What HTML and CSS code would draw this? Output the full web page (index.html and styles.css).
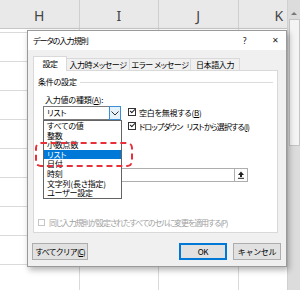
FILE: index.html
```html
<!DOCTYPE html>
<html lang="ja">
<head>
    <meta charset="UTF-8">
    <title>データの入力規則</title>
    <link rel="stylesheet" href="styles.css">
</head>
<body>
    <div class="sheet">
        <div class="grid">
            <div class="col-head">
                <div class="col">H</div>
                <div class="col">I</div>
                <div class="col">J</div>
                <div class="col">K</div>
            </div>
            <div class="cells"></div>
        </div>
        <div class="vscroll">
            <div class="up"></div>
            <div class="thumb"></div>
        </div>
    </div>

    <div class="dialog">
        <div class="titlebar">
            <span class="title">データの入力規則</span>
            <span class="help">?</span>
            <span class="close">✕</span>
        </div>
        <div class="body">
            <div class="tabs">
                <div class="tab active">設定</div>
                <div class="tab t2">入力時メッセージ</div>
                <div class="tab t3">エラー メッセージ</div>
                <div class="tab t4">日本語入力</div>
            </div>
            <div class="panel">
                <div class="group">条件の設定</div>
                <div class="field-label">入力値の種類(<u>A</u>):</div>
                <div class="row">
                    <div class="combo">
                        <div class="combo-text">リスト</div>
                        <div class="combo-btn">
                            <svg width="8" height="5" viewBox="0 0 8 5"><path d="M0.5 0.5 L4 4 L7.5 0.5" fill="none" stroke="#333" stroke-width="1"/></svg>
                        </div>
                        <ul class="droplist">
                            <li>すべての値</li>
                            <li>整数</li>
                            <li>小数点数</li>
                            <li class="sel">リスト</li>
                            <li>日付</li>
                            <li>時刻</li>
                            <li>文字列(長さ指定)</li>
                            <li>ユーザー設定</li>
                        </ul>
                    </div>
                    <div class="checks">
                        <label class="chk"><span class="box on"></span>空白を無視する(<u>B</u>)</label>
                        <label class="chk narrow"><span class="box on"></span>ドロップダウン<span class="gap"></span>リストから選択する(<u>I</u>)</label>
                    </div>
                </div>
                <div class="source">
                    <div class="src-input"></div>
                    <div class="src-btn">
                        <svg width="8" height="8" viewBox="0 0 8 8"><path d="M4 0.5 L7 4 L5 4 L5 6 L3 6 L3 4 L1 4 Z" fill="#222"/><rect x="1" y="6.8" width="6" height="1" fill="#222"/></svg>
                    </div>
                </div>
                <label class="chk disabled"><span class="box"></span>同じ入力規則が設定されたすべてのセルに変更を適用する(P)</label>
            </div>
            <div class="footer">
                <button class="btn clear">すべてクリア(<u>C</u>)</button>
                <button class="btn ok">OK</button>
                <button class="btn cancel">キャンセル</button>
            </div>
        </div>
    </div>

    <div class="mark"></div>
</body>
</html>
```

FILE: styles.css
```css
body {
    margin: 0;
    width: 300px;
    height: 290px;
    overflow: hidden;
    font-family: "Noto Sans CJK JP", "Noto Sans", sans-serif;
    font-feature-settings: "palt";
    background: #fff;
}
ul, li {
    margin: 0;
    padding: 0;
    list-style: none;
}
u {
    text-decoration-thickness: 1px;
    text-underline-offset: 1px;
}

/* シート */
.sheet {
    display: flex;
    width: 300px;
    height: 290px;
    overflow: hidden;
}
.grid {
    flex: 1;
    min-width: 0;
    display: flex;
    flex-direction: column;
    overflow: hidden;
}
.col-head {
    display: flex;
    height: 28px;
    background: #e9e9e9;
    border-bottom: 1px solid #c6c6c6;
}
.col {
    flex: 0 0 79.5px;
    box-sizing: border-box;
    padding-top: 9px;
    border-right: 1px solid #cfcfcf;
    text-align: center;
    font-family: "Noto Sans", sans-serif;
    font-size: 14px;
    line-height: 14px;
    color: #444;
}
.col:last-child {
    text-align: left;
    padding-left: 36px;
}
.cells {
    flex: 1;
    background:
        repeating-linear-gradient(to right, transparent 0 78.5px, #dadada 78.5px 79.5px),
        repeating-linear-gradient(to bottom, transparent 0 28px, #dadada 28px 29px);
    background-position: 0 0, 0 4px;
}
.vscroll {
    flex: 0 0 12px;
    background: #dcdcdc;
    border-left: 1px solid #d0d0d0;
    display: flex;
    flex-direction: column;
    align-items: center;
}
.up {
    width: 0;
    height: 0;
    margin-top: 12px;
    border-left: 3px solid transparent;
    border-right: 3px solid transparent;
    border-bottom: 3px solid #777;
}
.thumb {
    width: 9px;
    height: 125px;
    margin-top: 4px;
    background: #f4f4f4;
    border: 1px solid #c4c4c4;
}

/* ダイアログ */
.dialog {
    position: absolute;
    left: 27px;
    top: 30px;
    width: 260px;
    height: 237px;
    box-sizing: border-box;
    background: #f0f0f0;
    border: 1px solid #9a9a9a;
    box-shadow: 2px 3px 6px rgba(0,0,0,.3);
    font-size: 8px;
    letter-spacing: -0.2px;
    color: #000;
    white-space: nowrap;
}
.titlebar {
    display: flex;
    align-items: center;
    height: 19px;
    padding-left: 5px;
    background: #fff;
}
.title {
    flex: 1;
    font-size: 8px;
    letter-spacing: -0.9px;
}
.help {
    width: 29px;
    font-family: "Noto Sans", sans-serif;
    font-size: 8px;
}
.close {
    width: 14px;
    font-family: "DejaVu Sans", sans-serif;
    font-size: 8px;
    color: #222;
}
.body {
    padding: 6px 8px 0 5px;
}
.tabs {
    display: flex;
    align-items: flex-end;
    height: 14px;
}
.tab {
    box-sizing: border-box;
    height: 12px;
    line-height: 11px;
    text-align: center;
    border: 1px solid #d9d9d9;
    border-bottom: none;
    background: #f0f0f0;
    margin-left: -1px;
    letter-spacing: -0.4px;
}
.tab.active {
    height: 15px;
    margin-bottom: -1px;
    margin-left: 0;
    line-height: 14px;
    background: #fff;
    width: 34px;
    position: relative;
    z-index: 1;
}
.t2 { width: 64px; }
.t3 { width: 62px; }
.t4 { width: 50px; }
.panel {
    position: relative;
    height: 163px;
    box-sizing: border-box;
    background: #fff;
    border: 1px solid #d9d9d9;
    padding: 6px 4px 0 4px;
}
.group {
    display: flex;
    align-items: center;
    height: 10px;
    line-height: 10px;
}
.group::after {
    content: "";
    flex: 1;
    height: 1px;
    margin-left: 3px;
    background: #dcdcdc;
}
.field-label {
    margin: 8px 0 0 7px;
    height: 10px;
    line-height: 10px;
}
.row {
    display: flex;
    margin: 1px 0 0 5px;
}
.combo {
    position: relative;
    display: flex;
    width: 78px;
    height: 14px;
    box-sizing: border-box;
    border: 1px solid #7a7a7a;
    background: #fff;
}
.combo-text {
    flex: 1;
    padding-left: 3px;
    line-height: 12px;
}
.combo-btn {
    width: 10px;
    margin: -1px -1px -1px 0;
    display: flex;
    align-items: center;
    justify-content: center;
    background: #e5f1fb;
    border: 1px solid #3c8fd6;
}
.droplist {
    position: absolute;
    left: -1px;
    top: 13px;
    width: 79px;
    box-sizing: border-box;
    border: 1px solid #646464;
    background: #fff;
    z-index: 2;
}
.droplist li {
    height: 9.6px;
    line-height: 9.6px;
    padding-left: 3px;
}
.droplist li.sel {
    background: #0078d7;
    color: #fff;
}
.checks {
    display: flex;
    flex-direction: column;
    margin: -1px 0 0 7px;
}
.chk {
    display: flex;
    align-items: center;
    height: 14px;
    white-space: nowrap;
}
.chk.narrow {
    letter-spacing: -0.85px;
}
.gap {
    width: 4px;
}
.box {
    flex: none;
    width: 8px;
    height: 8px;
    box-sizing: border-box;
    margin-right: 3px;
    border: 1px solid #333;
    background: #fff;
    position: relative;
}
.box.on::after {
    content: "";
    position: absolute;
    left: 1px;
    top: 0;
    width: 4px;
    height: 2px;
    border-left: 1px solid #222;
    border-bottom: 1px solid #222;
    transform: rotate(-45deg);
}
.source {
    display: flex;
    margin: 35px 0 0 5px;
    width: 205px;
    height: 14px;
}
.src-input {
    flex: 1;
    border: 1px solid #adadad;
    border-right: none;
}
.src-btn {
    width: 14px;
    box-sizing: border-box;
    border: 1px solid #adadad;
    background: #fdfdfd;
    display: flex;
    align-items: center;
    justify-content: center;
}
.chk.disabled {
    margin-top: 33px;
    color: #a0a0a0;
    letter-spacing: -1.1px;
}
.chk.disabled .box {
    width: 7px;
    height: 7px;
    margin-right: 4px;
    border-color: #c6c6c6;
}
.footer {
    position: relative;
    height: 33px;
}
.btn {
    position: absolute;
    top: 10px;
    height: 17px;
    box-sizing: border-box;
    padding: 0;
    font-family: inherit;
    font-size: 8px;
    letter-spacing: -0.3px;
    white-space: nowrap;
    background: #e1e1e1;
    border: 1px solid #adadad;
    color: #000;
}
.clear {
    left: -1px;
    width: 56px;
    letter-spacing: -0.9px;
}
.ok {
    left: 146px;
    width: 48px;
    border: 2px solid #0078d7;
}
.cancel { left: 200px; width: 48px; }

/* 赤い点線の囲み */
.mark {
    position: absolute;
    left: 35px;
    top: 142px;
    width: 98px;
    height: 25px;
    box-sizing: border-box;
    border: 2px dashed #e8303a;
    border-radius: 6px;
    z-index: 5;
}
```
